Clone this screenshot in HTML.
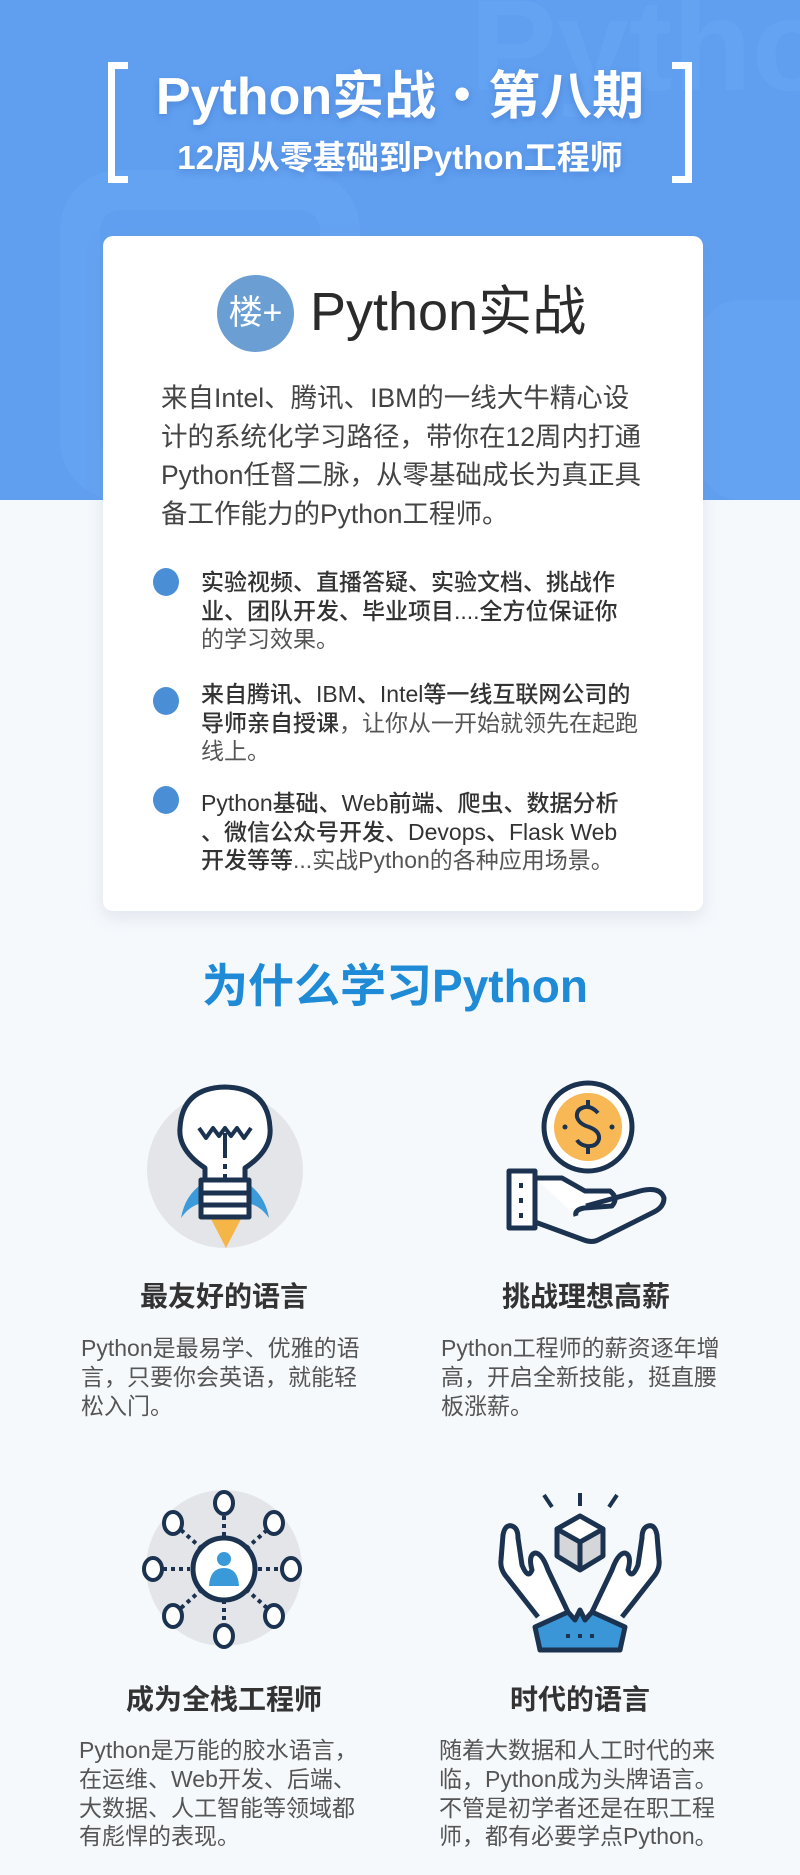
<!DOCTYPE html>
<html><head><meta charset="utf-8"><style>
*{margin:0;padding:0;box-sizing:border-box}
body{width:800px;height:1875px;background:#f6f9fc;position:relative;overflow:hidden;font-family:"Liberation Sans","Noto Sans CJK SC",sans-serif}
.a{position:absolute;white-space:nowrap}
#blue{position:absolute;left:0;top:0;width:800px;height:500px;background:#609ff0;overflow:hidden}
.wm{position:absolute;color:#64a3f2;font-weight:bold}
.card{position:absolute;left:103px;top:236px;width:600px;height:675px;background:#fff;border-radius:10px;box-shadow:0 6px 18px rgba(120,140,170,.18)}
.p{font-size:26.5px;color:#444;line-height:38.5px}
.b{font-size:23px;color:#333;line-height:28.5px;font-weight:500}
.dot{position:absolute;width:26px;height:28px;border-radius:50%;background:#4a8fd6}
.h{font-size:28px;font-weight:bold;color:#333;text-align:center;width:300px}
.d{font-size:23px;color:#555;line-height:28.8px}
</style></head><body>
<div id="blue">
<div class="wm" style="left:470px;top:-30px;font-size:130px">Pytho</div>
<div style="position:absolute;left:60px;top:170px;width:300px;height:330px;border:40px solid #64a3f2;border-radius:60px"></div>
<div style="position:absolute;left:700px;top:300px;width:150px;height:200px;background:#64a3f2;border-radius:40px"></div>
</div>
<div style="position:absolute;left:108px;top:62px;width:20px;height:121px;border:7px solid #fff;border-right:none"></div>
<div style="position:absolute;left:672px;top:62px;width:20px;height:121px;border:7px solid #fff;border-left:none"></div>
<div class="a" style="left:0;width:800px;text-align:center;top:67px;font-size:52px;font-weight:bold;color:#fff;line-height:60px;text-shadow:0 3px 8px rgba(40,80,160,.3)">Python实战・第八期</div>
<div class="a" style="left:0;width:800px;text-align:center;top:138px;font-size:33px;font-weight:bold;color:#fff;line-height:40px;text-shadow:0 3px 8px rgba(40,80,160,.3)">12周从零基础到Python工程师</div>

<div class="card"></div>
<div style="position:absolute;left:217px;top:275px;width:77px;height:77px;border-radius:50%;background:#6b9fd3;color:#fff;font-size:34px;line-height:77px;text-align:center">楼+</div>
<div class="a" style="left:310px;top:279px;font-size:54px;color:#2b2b2b;line-height:66px">Python实战</div>
<div class="a p" style="left:161px;top:379px">来自Intel、腾讯、IBM的一线大牛精心设<br>计的系统化学习路径，带你在12周内打通<br>Python任督二脉，从零基础成长为真正具<br>备工作能力的Python工程师。</div>

<div class="dot" style="left:153px;top:568px"></div>
<div class="a b" style="left:201px;top:568px">实验视频、直播答疑、实验文档、挑战作<br>业、团队开发、毕业项目....全方位保证你<br><span style="color:#555;font-weight:normal">的学习效果。</span></div>
<div class="dot" style="left:153px;top:687px"></div>
<div class="a b" style="left:201px;top:680px">来自腾讯、IBM、Intel等一线互联网公司的<br>导师亲自授课<span style="font-weight:normal;color:#555">，让你从一开始就领先在起跑<br>线上。</span></div>
<div class="dot" style="left:153px;top:786px"></div>
<div class="a b" style="left:201px;top:789px">Python基础、Web前端、爬虫、数据分析<br>、微信公众号开发、Devops、Flask Web<br>开发等等<span style="font-weight:normal;color:#555">...实战Python的各种应用场景。</span></div>

<div class="a" style="left:0;width:790px;text-align:center;top:958px;font-size:46px;font-weight:bold;color:#1f8bd6;line-height:56px">为什么学习Python</div>

<svg style="position:absolute;left:0;top:0" width="800" height="1875" viewBox="0 0 800 1875" fill="none" stroke="#1b3350" stroke-width="5" stroke-linejoin="round">
<circle cx="225" cy="1170" r="78" fill="#e3e5e8" stroke="none"/>
<path d="M203 1183 Q185 1195 181 1218 Q190 1205 203 1203Z" fill="#3b9ada" stroke="none"/>
<path d="M247 1183 Q265 1195 269 1218 Q260 1205 247 1203Z" fill="#3b9ada" stroke="none"/>
<path d="M210 1217 L242 1217 L226 1248Z" fill="#f6b547" stroke="none"/>
<path d="M205 1180 L205 1168 Q178 1150 180 1128 Q182 1088 225 1087 Q268 1088 270 1128 Q272 1150 245 1168 L245 1180" fill="#fff"/>
<rect x="201" y="1180" width="48" height="37" fill="#fff"/>
<path d="M201 1193 H249 M201 1205 H249"/>
<path d="M199 1128 L206 1138 L213 1128 L219 1136 L225 1128 L231 1136 L237 1128 L244 1138 L251 1128" stroke-width="4"/>
<path d="M225 1133 V1158 M225 1164 V1169 M225 1174 V1179" stroke-width="4"/>
<circle cx="588" cy="1127" r="44" fill="#fff"/>
<circle cx="588" cy="1127" r="34" fill="#f7b855" stroke="none"/>
<path d="M598 1113 Q592 1106 585 1107 Q576 1109 577 1117 Q579 1124 589 1127 Q600 1131 599 1139 Q597 1147 587 1146 Q580 1145 577 1140" stroke-width="4"/>
<path d="M588 1100 V1107 M588 1146 V1154" stroke-width="4"/>
<circle cx="565" cy="1127" r="2.5" fill="#1b3350" stroke="none"/><circle cx="612" cy="1127" r="2.5" fill="#1b3350" stroke="none"/>
<rect x="509" y="1171" width="26" height="57" fill="#fff"/>
<path d="M521 1183 V1188 M521 1198 V1203 M521 1213 V1218" stroke-width="4"/>
<path d="M535 1178 L562 1178 L585 1191 L610 1191 Q619 1198 612 1206 L584 1208 Q574 1210 576 1216" fill="#fff"/>
<path d="M586 1206 L640 1191 Q660 1186 664 1198 Q664 1207 654 1212 L598 1240 Q592 1243 584 1240 L535 1222"/>
<circle cx="224" cy="1568" r="78" fill="#e3e5e8" stroke="none"/>
<g stroke-width="4">
<path d="M224 1516 V1538 M224 1600 V1622 M163 1569 H190 M258 1569 H283 M181 1530 L200 1547 M267 1530 L248 1547 M181 1608 L200 1591 M267 1608 L248 1591" stroke-dasharray="4 4"/>
<ellipse cx="224" cy="1503" rx="9" ry="11" fill="#fff"/>
<ellipse cx="224" cy="1636" rx="9" ry="11" fill="#fff"/>
<ellipse cx="153" cy="1569" rx="9" ry="11" fill="#fff"/>
<ellipse cx="291" cy="1569" rx="9" ry="11" fill="#fff"/>
<ellipse cx="173" cy="1523" rx="9" ry="11" fill="#fff"/>
<ellipse cx="274" cy="1523" rx="9" ry="11" fill="#fff"/>
<ellipse cx="173" cy="1616" rx="9" ry="11" fill="#fff"/>
<ellipse cx="274" cy="1616" rx="9" ry="11" fill="#fff"/>
</g>
<circle cx="224" cy="1569" r="31" fill="#fff"/>
<circle cx="224" cy="1559" r="7" fill="#3a9ad9" stroke="none"/>
<path d="M209 1586 Q210 1568 224 1568 Q238 1568 239 1586Z" fill="#3a9ad9" stroke="none"/>
<path d="M544 1495 L552 1507 M580 1493 V1506 M617 1495 L609 1507" stroke-width="4"/>
<path d="M580 1516 L603 1529 L603 1556 L580 1570 L557 1556 L557 1529Z" fill="#d4d6d9"/>
<path d="M557 1529 L580 1542 L603 1529 M580 1542 V1570" fill="none"/>
<path d="M580 1516 L603 1529 L580 1542 L557 1529Z" fill="#fff"/>
<path d="M538 1617 L505 1575 Q500 1568 501 1560 L503 1535 Q505 1524 512 1526 Q518 1528 518 1538 L522 1565 Q528 1580 532 1570 Q528 1555 535 1553 Q542 1553 548 1570 L568 1612" fill="#fff"/>
<path d="M622 1617 L655 1575 Q660 1568 659 1560 L657 1535 Q655 1524 648 1526 Q642 1528 642 1538 L638 1565 Q632 1580 628 1570 Q632 1555 625 1553 Q618 1553 612 1570 L592 1612" fill="#fff"/>
<path d="M535 1627 L568 1612 L575 1620 L580 1610 L585 1620 L592 1612 L625 1627 L620 1650 L540 1650Z" fill="#3a96d6"/>
<path d="M566 1636 h4 M578 1636 h4 M590 1636 h4" stroke-width="4"/>
</svg>

<div class="a h" style="left:74px;top:1275px">最友好的语言</div>
<div class="a h" style="left:436px;top:1275px">挑战理想高薪</div>
<div class="a d" style="left:81px;top:1334px">Python是最易学、优雅的语<br>言，只要你会英语，就能轻<br>松入门。</div>
<div class="a d" style="left:441px;top:1334px">Python工程师的薪资逐年增<br>高，开启全新技能，挺直腰<br>板涨薪。</div>

<div class="a h" style="left:74px;top:1678px">成为全栈工程师</div>
<div class="a h" style="left:430px;top:1678px">时代的语言</div>
<div class="a d" style="left:79px;top:1736px">Python是万能的胶水语言，<br>在运维、Web开发、后端、<br>大数据、人工智能等领域都<br>有彪悍的表现。</div>
<div class="a d" style="left:439px;top:1736px">随着大数据和人工时代的来<br>临，Python成为头牌语言。<br>不管是初学者还是在职工程<br>师，都有必要学点Python。</div>
</body></html>
